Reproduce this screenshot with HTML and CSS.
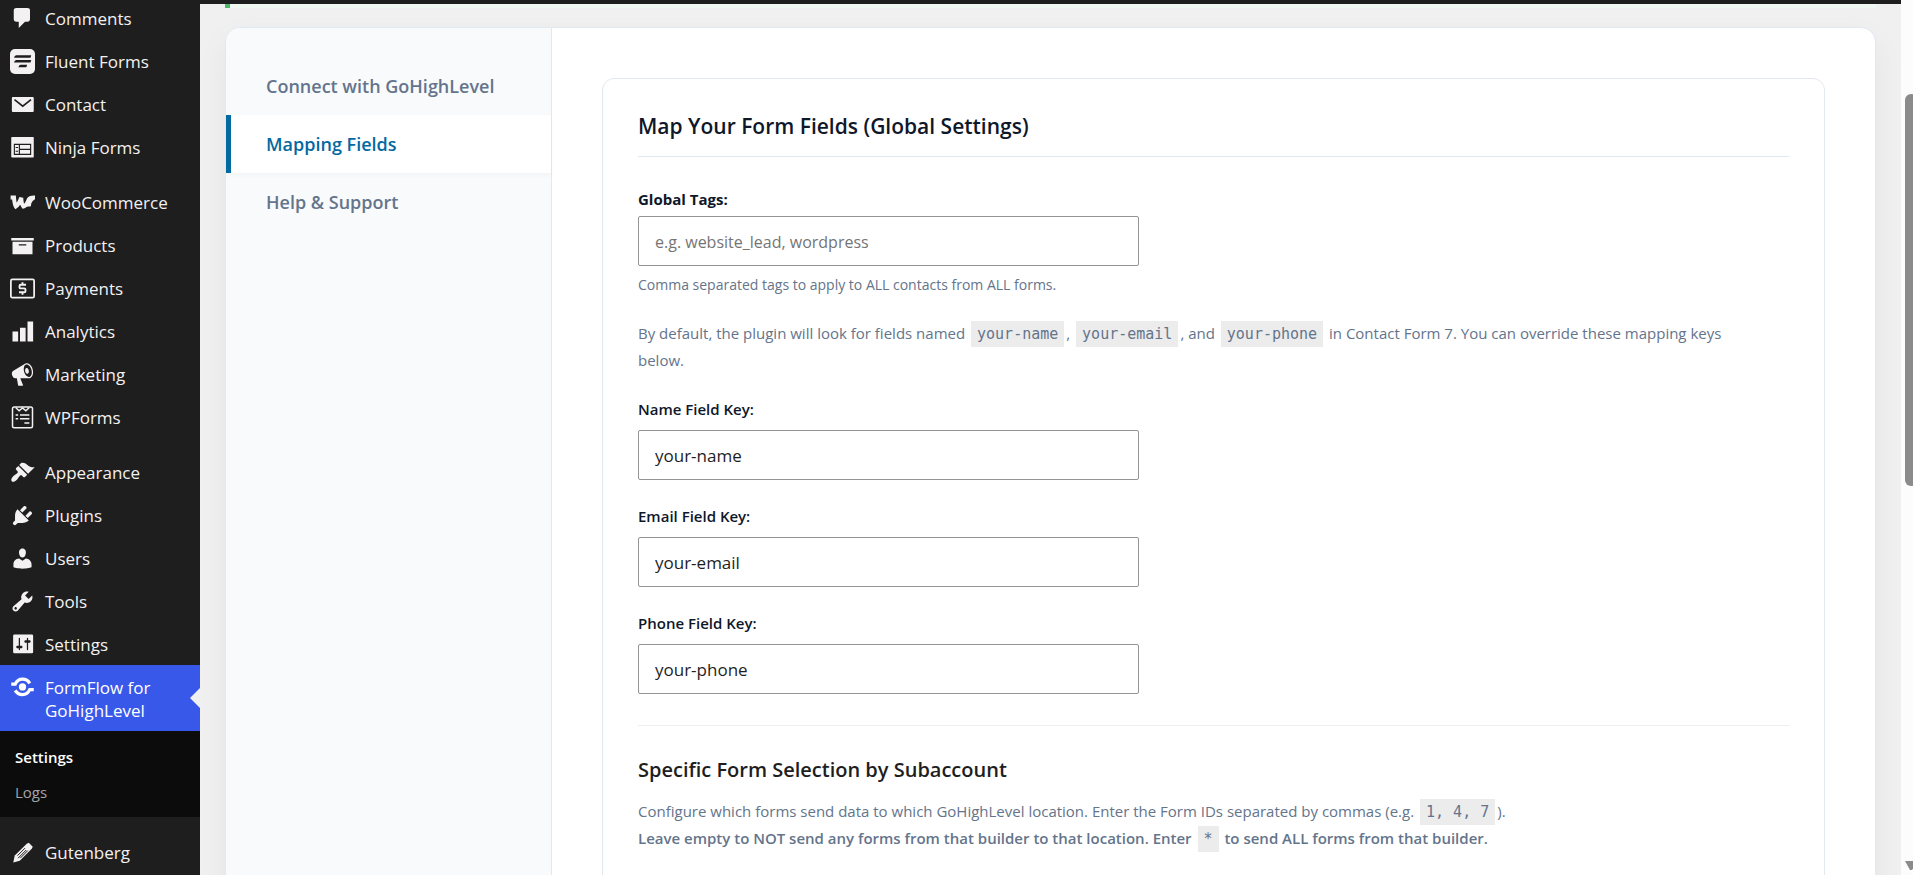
FILE: index.html
```html
<!DOCTYPE html>
<html lang="en">
<head>
<meta charset="utf-8">
<title>FormFlow for GoHighLevel – Settings</title>
<link rel="stylesheet" href="styles.css">
</head>
<body>
<div class="app">
  <nav class="menu" aria-label="Main menu">
    <ul class="menu-group">
      <li><a class="menu-item" href="#"><svg class="icon" viewBox="0 0 20 20"><path d="M5 1.500h9q.82 0 1.410.59T16 3.500v7q0 .82-.59 1.410T14 12.500h-2l-5 5v-5H5q-.82 0-1.410-.59T3 10.500V3.500q0-.82.59-1.410T5 1.500z"/></svg>Comments</a></li>
      <li><a class="menu-item" href="#"><svg class="icon" viewBox="0 0 20 20"><rect width="20" height="20" rx="4"/><path class="cut" d="M5 5h12l-.6 2H3.200q.4-2 1.800-2zM5 8.800h12l-.6 2H3.200q.4-2 1.800-2zM8.500 12.600h5.200l-.6 2H6.700q.4-2 1.800-2z"/></svg>Fluent Forms</a></li>
      <li><a class="menu-item" href="#"><svg class="icon" viewBox="0 0 20 20"><rect x="1.500" y="4" width="17.500" height="12" rx=".8"/><path class="line-cut" d="M3.600 6.100l6.600 5.200 6.600-5.200" stroke-width="1.300"/></svg>Contact</a></li>
      <li><a class="menu-item" href="#"><svg class="icon" viewBox="0 0 20 20"><rect x="1" y="1.500" width="18" height="16.500" rx=".6"/><path class="line-cut" d="M3.500 7.500h13v8h-13zM7.500 7.500v8M7.500 11.500h9M4.500 10h2M4.500 13h2" stroke-width=".9"/></svg>Ninja Forms</a></li>
    </ul>
    <ul class="menu-group">
      <li><a class="menu-item" href="#"><svg class="icon" viewBox="0 0 20 20"><path class="line" d="M.5 6h2.700q.4 5.600 1.500 7.200Q7 11.500 9 6.200q.2 5.200 1.700 7 2.600-.8 4.300-5.600.8-1.600 4.300-1.600Q14.800 8.500 15.200 13.200" stroke-width="3.200"/></svg>WooCommerce</a></li>
      <li><a class="menu-item" href="#"><svg class="icon" viewBox="0 0 20 20"><path d="M19 4v2H1V4h18zM2 7h16v10H2V7zm11 3V9H7v1h6z"/></svg>Products</a></li>
      <li><a class="menu-item" href="#"><svg class="icon" viewBox="0 0 20 20"><rect class="line" x=".7" y="2.700" width="18.600" height="14.600" rx="1.200" stroke-width="1.400"/><path class="line" d="M12.800 7H8.600q-1 0-1 1v.9q0 1 1 1h2.800q1 0 1 1v1q0 1.100-1 1.100H7.200M10 5v2M10 13v2" stroke-width="1.500"/></svg>Payments</a></li>
      <li><a class="menu-item" href="#"><svg class="icon" viewBox="0 0 20 20"><path d="M18.500 18V2h-4.500v16h4.500zm-6 0V7H8v11h4.500zm-6 0v-8H2v8h4.500z"/></svg>Analytics</a></li>
      <li><a class="menu-item" href="#"><svg class="icon" viewBox="0 0 20 20"><path fill-rule="evenodd" d="M18.150 5.940c.46 1.620.38 3.220-.02 4.480-.42 1.280-1.260 2.180-2.300 2.480-.16.06-.26.06-.4.06-.06.02-.12.02-.18.02-.06.02-.14.02-.22.02h-6.800l2.220 5.500c.02.14-.06.26-.14.34-.08.1-.24.16-.34.16H6.950c-.1 0-.26-.06-.34-.16-.08-.08-.16-.2-.14-.34l-1-5.500H4.250l-.02-.02c-.5.06-1.080-.18-1.540-.62s-.88-1.080-1.060-1.880c-.24-.8-.2-1.560-.02-2.200.18-.62.58-1.080 1.060-1.300l.02-.02 9-5.400c.1-.06.18-.1.24-.16.06-.04.14-.08.24-.12.16-.08.28-.12.5-.18 1.040-.3 2.240.1 3.220.98s1.840 2.240 2.260 3.860zm-2.580 5.980h-.02c.4-.1.74-.34 1.040-.7.58-.7.86-1.760.86-3.040 0-.64-.1-1.300-.28-1.980-.34-1.360-1.020-2.500-1.780-3.240s-1.680-1.100-2.460-.88c-.82.22-1.400.96-1.700 2-.32 1.040-.28 2.360.06 3.720.38 1.360 1 2.500 1.800 3.240.78.74 1.620 1.100 2.480.88z"/><path d="M13.030 4.840c.22-.04.42-.02.62.04.38.16.76.48 1.020 1s.42 1.200.42 1.780c0 .3-.04.56-.12.8-.18.48-.44.84-.86.94-.34.1-.8-.06-1.140-.4s-.64-.86-.78-1.500c-.18-.62-.12-1.240.02-1.720s.48-.84.82-.94z"/></svg>Marketing</a></li>
      <li><a class="menu-item" href="#"><svg class="icon" viewBox="0 0 20 20"><rect class="line" x="2" y="1.600" width="16" height="16.600" rx="1.400" stroke-width="1.200"/><path class="line" d="M4.500 2l2.800 2.600L10 2.400l2.700 2.200L15.500 2M4.500 8h2M8 8h7.500M4.500 11h2M8 11h7.500M11.500 14.300h4" stroke-width="1.200"/></svg>WPForms</a></li>
    </ul>
    <ul class="menu-group">
      <li><a class="menu-item" href="#"><svg class="icon" viewBox="0 0 20 20"><path d="M14.480 11.060L7.410 3.990l1.500-1.500c.5-.56 2.300-.47 3.510.32 1.210.8 1.430 1.280 2.910 2.100 1.180.64 2.450 1.260 4.450.85zm-.71.71L6.700 4.700 4.930 6.470c-.39.39-.39 1.020 0 1.410l1.060 1.060c.39.39.39 1.030 0 1.420-.6.6-1.430 1.110-2.210 1.690-.35.26-.7.53-1.010.84C1.430 14.230.4 16.080 1.400 17.070c.99 1 2.840-.03 4.180-1.360.31-.31.58-.66.85-1.020.57-.78 1.080-1.610 1.690-2.210.39-.39 1.020-.39 1.410 0l1.060 1.060c.39.39 1.020.39 1.410 0z"/></svg>Appearance</a></li>
      <li><a class="menu-item" href="#"><svg class="icon" viewBox="0 0 20 20"><path d="M13.110 4.360L9.870 7.600 8 5.730l3.240-3.240c.35-.34 1.050-.2 1.560.32.52.51.66 1.210.31 1.550zm-8 1.770l.91-1.120 9.010 9.010-1.190.84c-.71.71-2.630 1.160-3.820 1.160H6.140L4.900 17.260c-.59.59-1.540.59-2.120 0-.59-.58-.59-1.530 0-2.120l1.240-1.240v-3.880c0-1.130.4-3.190 1.090-3.890zm7.260 3.970l3.240-3.240c.34-.35 1.040-.21 1.550.31.52.51.66 1.210.31 1.550l-3.240 3.250z"/></svg>Plugins</a></li>
      <li><a class="menu-item" href="#"><svg class="icon" viewBox="0 0 20 20"><path d="M10 9.250c-2.270 0-2.730-3.440-2.730-3.440C7 4.020 7.820 2 9.970 2c2.160 0 2.980 2.020 2.710 3.810 0 0-.41 3.440-2.680 3.440zm0 2.570L12.720 10c2.390 0 4.520 2.330 4.520 4.530v2.490s-3.650 1.130-7.240 1.130c-3.650 0-7.240-1.130-7.240-1.130v-2.490c0-2.250 1.940-4.480 4.470-4.480z"/></svg>Users</a></li>
      <li><a class="menu-item" href="#"><svg class="icon" viewBox="0 0 20 20"><path fill-rule="evenodd" d="M16.680 9.770c-1.340 1.340-3.300 1.670-4.950.99l-5.410 6.520c-.99.99-2.590.99-3.580 0s-.99-2.590 0-3.570l6.520-5.420c-.68-1.650-.35-3.610.99-4.950 1.280-1.280 3.120-1.620 4.720-1.060l-2.890 2.890 2.820 2.820 2.860-2.870c.53 1.580.18 3.390-1.080 4.650zM3.810 16.210c.4.39 1.040.39 1.430 0 .4-.4.4-1.040 0-1.430-.39-.4-1.030-.4-1.430 0-.39.39-.39 1.030 0 1.430z"/></svg>Tools</a></li>
      <li><a class="menu-item" href="#"><svg class="icon" viewBox="0 0 20 20"><rect x="2.500" y="2" width="16" height="15" rx="1"/><path class="cut" d="M8 11h1c.55 0 1 .45 1 1s-.45 1-1 1H8v1c0 .28-.22.5-.5.5s-.5-.22-.5-.5v-1H6c-.55 0-1-.45-1-1s.45-1 1-1h1V5c0-.28.22-.5.5-.5s.5.22.5.5v6zm5.500-2.500h-1c-.55 0-1-.45-1-1s.45-1 1-1h1V5c0-.28.22-.5.5-.5s.5.22.5.5v1.500h1c.55 0 1 .45 1 1s-.45 1-1 1h-1V14c0 .28-.22.5-.5.5s-.5-.22-.5-.5z"/></svg>Settings</a></li>
      <li>
        <a class="menu-item current" href="#" aria-current="page"><svg class="icon" viewBox="0 0 20 20"><path class="line" d="M1 7.300h3.200C5.500 4.500 7.500 3.300 10 3.300c2.800 0 4.600 1.200 5.800 3.400M19 11.700h-3.200c-1.300 2.800-3.300 4-5.800 4-2.800 0-4.600-1.200-5.800-3.400" stroke-width="2.600"/><circle cx="10" cy="9.500" r="2.900"/></svg>FormFlow for GoHighLevel</a>
        <ul class="submenu">
          <li><a class="submenu-item selected" href="#">Settings</a></li>
          <li><a class="submenu-item" href="#">Logs</a></li>
        </ul>
      </li>
      <li><a class="menu-item" href="#"><svg class="icon" viewBox="0 0 20 20"><path d="M2.600 18l1.200-5.600L13.400 3l1.600-.8 3.200 3.200-.8 1.600-9.600 9.600z"/><path class="line-cut" d="M6 12.500l6-6M8.200 14.500l6-6M6.500 14.500l6.500-6.500" stroke-width=".8"/></svg>Gutenberg</a></li>
    </ul>
  </nav>

  <div class="page">
    <div class="topbar"></div>
    <div class="notice"></div>
    <main class="panel">
      <nav class="tabs" aria-label="Plugin sections">
        <a class="tab" href="#">Connect with GoHighLevel</a>
        <a class="tab active" href="#">Mapping Fields</a>
        <a class="tab" href="#">Help &amp; Support</a>
      </nav>
      <div class="content">
        <form class="card">
          <h2 class="card-title">Map Your Form Fields (Global Settings)</h2>
          <div class="field">
            <label class="label strong" for="tags">Global Tags:</label>
            <input class="input" id="tags" type="text" placeholder="e.g. website_lead, wordpress">
            <p class="hint">Comma separated tags to apply to ALL contacts from ALL forms.</p>
          </div>
          <p class="text">By default, the plugin will look for fields named <code>your-name</code>, <code>your-email</code>, and <code>your-phone</code> in Contact Form 7. You can override these mapping keys<br>below.</p>
          <div class="field spaced">
            <label class="label" for="name-key">Name Field Key:</label>
            <input class="input" id="name-key" type="text" value="your-name">
          </div>
          <div class="field spaced">
            <label class="label" for="email-key">Email Field Key:</label>
            <input class="input" id="email-key" type="text" value="your-email">
          </div>
          <div class="field spaced">
            <label class="label" for="phone-key">Phone Field Key:</label>
            <input class="input" id="phone-key" type="text" value="your-phone">
          </div>
          <hr class="rule">
          <h3 class="section-title">Specific Form Selection by Subaccount</h3>
          <p class="text">Configure which forms send data to which GoHighLevel location. Enter the Form IDs separated by commas (e.g. <code>1, 4, 7</code>).<br><strong>Leave empty to NOT send any forms from that builder to that location. Enter <code>*</code> to send ALL forms from that builder.</strong></p>
        </form>
      </div>
    </main>
  </div>

  <div class="scrollbar" aria-hidden="true">
    <div class="thumb"></div>
    <svg class="arrow" viewBox="0 0 12 10"><path d="M0 0h12L7 9H5z"/></svg>
  </div>
</div>
</body>
</html>
```
FILE: styles.css
```css
* {
  box-sizing: border-box;
}

body {
  margin: 0;
  background: #f0f0f0;
  color: #1e1e1e;
  font-family: "Open Sans", "Noto Sans", sans-serif;
  font-size: 15px;
}

a {
  color: inherit;
  text-decoration: none;
}

ul {
  list-style: none;
  margin: 0;
  padding: 0;
}

.app {
  display: flex;
  height: 100vh;
  overflow: hidden;
}

/* Admin menu */
.menu {
  flex: none;
  width: 200px;
  margin-top: -4px;
  background: #1e1e1e;
  color: #f3f1f1;
}

.menu-group {
  margin-bottom: 12px;
}

.menu-item {
  position: relative;
  display: flex;
  gap: 10px;
  padding: 11px 24px 9px 10px;
  font-size: 17px;
  line-height: 23px;
}

.icon {
  flex: none;
  width: 25px;
  height: 25px;
  margin: -1px 0;
  fill: currentColor;
}

.icon .cut {
  fill: #1e1e1e;
}

.icon .line {
  fill: none;
  stroke: currentColor;
}

.icon .line-cut {
  fill: none;
  stroke: #1e1e1e;
}

.current {
  background: #3858e9;
  color: #fff;
}

.current::after {
  content: "";
  position: absolute;
  right: 0;
  top: 50%;
  margin-top: -10px;
  border: 10px solid transparent;
  border-left-width: 0;
  border-right-color: #f0f0f0;
}

.submenu {
  padding: 9px 0 7px;
  margin-bottom: 13px;
  background: #0c0c0c;
}

.submenu-item {
  display: block;
  padding: 6px 15px;
  color: #a5a5a5;
  font-size: 15px;
  line-height: 23px;
}

.submenu-item.selected {
  color: #fff;
  font-weight: 600;
}

/* Page body */
.page {
  flex: 1;
  min-width: 0;
}

.topbar {
  height: 4px;
  background: #1e1e1e;
}

.notice {
  height: 4px;
  margin: 0 25px;
  border-left: 5px solid #4ab866;
  background: #eff9f1;
}

.panel {
  display: flex;
  min-height: 120vh;
  margin: 19px 25px 0;
  border: 1px solid #e2e8f0;
  border-radius: 15px;
  background: #fff;
  box-shadow: 0 12px 32px rgba(0, 0, 0, 0.05);
  overflow: hidden;
}

.tabs {
  flex: none;
  width: 326px;
  padding-top: 29px;
  border-right: 1px solid #e2e8f0;
  background: #f8fafc;
}

.tab {
  display: block;
  padding: 17px 35px;
  border-left: 5px solid transparent;
  color: #64748b;
  font-size: 18px;
  font-weight: 600;
  line-height: 24px;
}

.tab.active {
  border-left-color: #0369a1;
  background: #fff;
  color: #0369a1;
  box-shadow: 0 2px 5px rgba(0, 0, 0, 0.03);
}

.content {
  flex: 1;
  min-width: 0;
  padding: 50px;
}

.card {
  min-height: 100%;
  padding: 32px 35px;
  border: 1px solid #e2e8f0;
  border-radius: 12px;
}

.card-title {
  margin: 0 0 28px;
  padding-bottom: 15px;
  border-bottom: 1px solid #e2e8f0;
  color: #0f172a;
  font-size: 21px;
  font-weight: 600;
  line-height: 30px;
}

.field {
  display: flex;
  flex-direction: column;
  align-items: flex-start;
}

.label {
  margin-bottom: 6px;
  color: #0f172a;
  font-size: 15px;
  font-weight: 600;
  line-height: 29px;
}

.label.strong {
  margin-bottom: 2px;
  font-weight: 700;
}

.input {
  width: 501px;
  max-width: 100%;
  height: 50px;
  padding: 0 16px;
  border: 1px solid #949494;
  border-radius: 2px;
  background: #fff;
  color: #1e1e1e;
  font: inherit;
  font-size: 17px;
}

.input::placeholder {
  color: #757575;
  font-size: 16px;
}

.hint {
  margin: 7px 0 23px;
  color: #64748b;
  font-size: 14px;
  line-height: 24px;
}

.text {
  margin: 0;
  color: #64748b;
  font-size: 15px;
  line-height: 26px;
}

.text strong {
  font-weight: 600;
}

code {
  margin: 0 2px;
  padding: 4px 6px;
  background: #ececec;
  font-family: "DejaVu Sans Mono", monospace;
  font-size: 15px;
  font-weight: 400;
}

.spaced {
  margin-top: 22px;
}

.rule {
  height: 1px;
  margin: 31px 0 30px;
  border: 0;
  background: #eee;
}

.section-title {
  margin: 0 0 14px;
  font-size: 20px;
  font-weight: 600;
  line-height: 28px;
}

/* Window scrollbar */
.scrollbar {
  display: flex;
  flex: none;
  flex-direction: column;
  justify-content: space-between;
  width: 12px;
  padding: 94px 0 4px 4px;
  background: #fcfcfc;
  overflow: hidden;
}

.thumb {
  width: 12px;
  height: 392px;
  border-radius: 6px;
  background: #8b8b8b;
}

.arrow {
  width: 12px;
  height: 10px;
  fill: #8b8b8b;
}
```
